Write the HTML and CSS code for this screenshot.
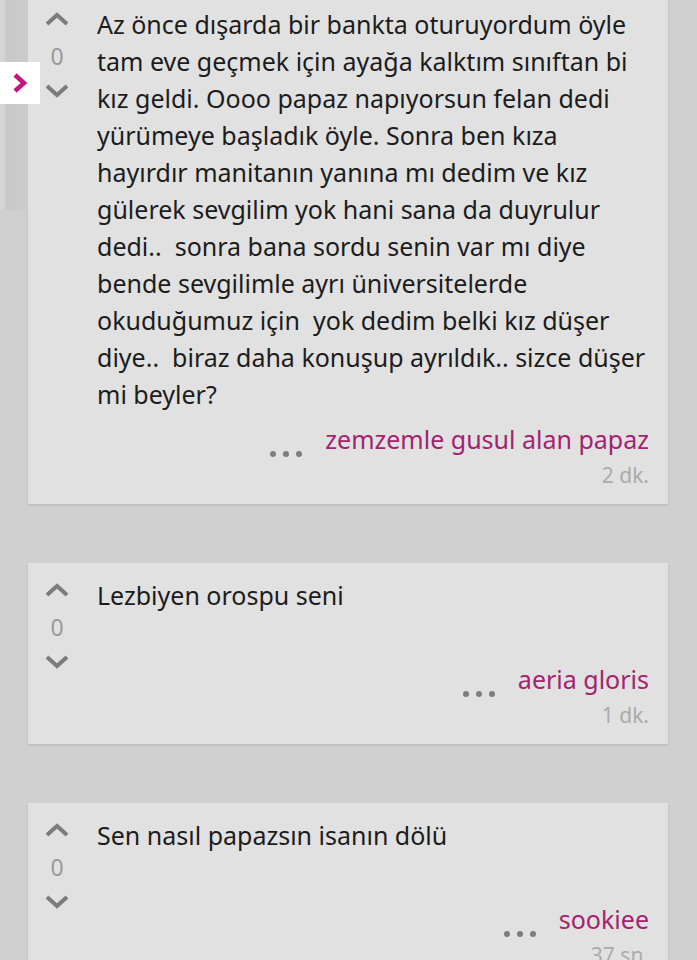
FILE: index.html
```html
<!DOCTYPE html>
<html>

<head>
  <title>Entries</title>
  <link rel="stylesheet" href="styles.css">
</head>

<body>
  <div class="side-shadow"></div>
  <div class="side-tab">
    <svg width="16" height="22" viewBox="0 0 16 22">
      <path d="M3 3 L12 11 L3 19" fill="none" stroke="#c2177c" stroke-width="4.5" />
    </svg>
  </div>

  <div class="entry-list">
    <div class="entry">
      <div class="entry-row">
        <div class="vote">
          <svg class="arrow" viewBox="0 0 24 14"><path d="M2 12 L12 3 L22 12" /></svg>
          <span class="count">0</span>
          <svg class="arrow" viewBox="0 0 24 14"><path d="M2 2 L12 11 L22 2" /></svg>
        </div>
        <div class="entry-text">Az önce dışarda bir bankta oturuyordum öyle tam eve geçmek için ayağa kalktım sınıftan bi kız geldi. Oooo papaz napıyorsun felan dedi yürümeye başladık öyle. Sonra ben kıza hayırdır manitanın yanına mı dedim ve kız gülerek sevgilim yok hani sana da duyrulur dedi..&nbsp; sonra bana sordu senin var mı diye bende sevgilimle ayrı üniversitelerde okuduğumuz için&nbsp; yok dedim belki kız düşer diye..&nbsp; biraz daha konuşup ayrıldık.. sizce düşer mi beyler?</div>
      </div>
      <div class="entry-footer">
        <div class="author-line">
          <span class="dots"><i></i><i></i><i></i></span>
          <span class="author">zemzemle gusul alan papaz</span>
        </div>
        <div class="time">2 dk.</div>
      </div>
    </div>

    <div class="entry">
      <div class="entry-row">
        <div class="vote">
          <svg class="arrow" viewBox="0 0 24 14"><path d="M2 12 L12 3 L22 12" /></svg>
          <span class="count">0</span>
          <svg class="arrow" viewBox="0 0 24 14"><path d="M2 2 L12 11 L22 2" /></svg>
        </div>
        <div class="entry-text">Lezbiyen orospu seni</div>
      </div>
      <div class="entry-footer">
        <div class="author-line">
          <span class="dots"><i></i><i></i><i></i></span>
          <span class="author">aeria gloris</span>
        </div>
        <div class="time">1 dk.</div>
      </div>
    </div>

    <div class="entry">
      <div class="entry-row">
        <div class="vote">
          <svg class="arrow" viewBox="0 0 24 14"><path d="M2 12 L12 3 L22 12" /></svg>
          <span class="count">0</span>
          <svg class="arrow" viewBox="0 0 24 14"><path d="M2 2 L12 11 L22 2" /></svg>
        </div>
        <div class="entry-text">Sen nasıl papazsın isanın dölü</div>
      </div>
      <div class="entry-footer">
        <div class="author-line">
          <span class="dots"><i></i><i></i><i></i></span>
          <span class="author">sookiee</span>
        </div>
        <div class="time">37 sn.</div>
      </div>
    </div>
  </div>
</body>

</html>
```

FILE: styles.css
```css
body {
  font-family: 'Noto Sans', sans-serif;
  background-color: #d0d0d0;
  margin: 0;
  padding: 0;
  overflow: hidden;
}

/* scrolled list, first card is cut at the top */
.entry-list {
  display: flex;
  flex-direction: column;
  gap: 59px;
  padding: 0 29px 0 28px;
  margin-top: -8px;
}

.entry {
  background-color: #e1e1e1;
  padding: 14px 19px 11px 10px;
  box-shadow: 0 1px 2px rgba(0, 0, 0, 0.12);
}

.entry-row {
  display: flex;
  align-items: flex-start;
  gap: 21px;
}

/* vote column hangs a little into the footer */
.vote {
  width: 38px;
  height: 84px;
  flex-shrink: 0;
  display: flex;
  flex-direction: column;
  align-items: center;
  padding-top: 6px;
  box-sizing: border-box;
}

.arrow {
  width: 24px;
  height: 14px;
  flex-shrink: 0;
  fill: none;
  stroke: #7c7c7c;
  stroke-width: 4;
}

.count {
  font-size: 23px;
  line-height: 24px;
  flex-shrink: 0;
  color: #9a9a9a;
  margin: 18px 0 16px;
}

.entry-text {
  flex: 1;
  font-size: 25px;
  line-height: 37px;
  color: #1c1c1c;
  min-height: 76px;
  padding-bottom: 8px;
}

.entry-footer {
  text-align: right;
}

.author-line {
  display: flex;
  justify-content: flex-end;
  align-items: center;
  gap: 23px;
  line-height: 36px;
}

.dots {
  display: flex;
  gap: 7px;
  margin-top: 30px;
}

.dots i {
  width: 6px;
  height: 6px;
  border-radius: 50%;
  background-color: #7d7d7d;
}

.author {
  font-size: 25px;
  color: #a3236f;
}

.time {
  font-size: 21px;
  line-height: 36px;
  color: #ababab;
}

.side-shadow {
  position: absolute;
  left: 0;
  top: 0;
  width: 28px;
  height: 210px;
  background: linear-gradient(to right, #d6d6d6 0, #d6d6d6 4px, #c9c9c9 6px, #cbcbcb 28px);
}

.side-tab {
  position: absolute;
  left: 0;
  top: 62px;
  width: 40px;
  height: 42px;
  background-color: #fff;
  display: flex;
  align-items: center;
  justify-content: center;
  z-index: 2;
}
```
